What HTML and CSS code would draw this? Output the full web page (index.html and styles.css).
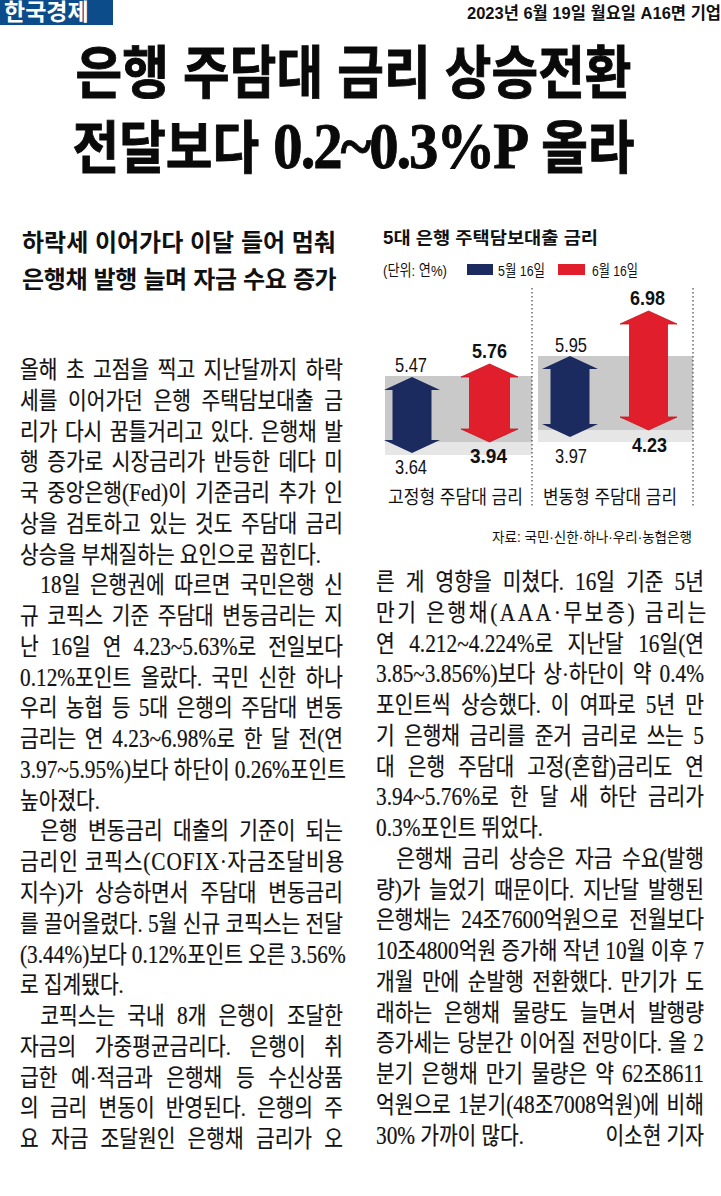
FILE: index.html
```html
<!DOCTYPE html>
<html lang="ko">
<head>
<meta charset="utf-8">
<title>은행 주담대 금리 상승전환</title>
<link rel="stylesheet" href="styles.css">
</head>
<body>
<header class="masthead">
  <div class="logo">한국경제</div>
  <div class="date">2023년 6월 19일 월요일 A16면 기업</div>
</header>

<h1 class="headline">
  <span class="hl-line">은행 주담대 금리 상승전환</span>
  <span class="hl-line">전달보다 <span class="hl-num">0.2~0.3%P</span> 올라</span>
</h1>

<main class="cols">
  <section class="col">
    <h2 class="sub">
      <span class="sub-line">하락세 이어가다 이달 들어 멈춰</span>
      <span class="sub-line">은행채 발행 늘며 자금 수요 증가</span>
    </h2>
    <div class="body body-left">
      <div class="body-inner">
        <span class="ln">올해 초 고점을 찍고 지난달까지 하락</span>
        <span class="ln">세를 이어가던 은행 주택담보대출 금</span>
        <span class="ln">리가 다시 꿈틀거리고 있다. 은행채 발</span>
        <span class="ln">행 증가로 시장금리가 반등한 데다 미</span>
        <span class="ln">국 중앙은행<span class="n">(Fed)</span>이 기준금리 추가 인</span>
        <span class="ln">상을 검토하고 있는 것도 주담대 금리</span>
        <span class="ln end">상승을 부채질하는 요인으로 꼽힌다.</span>
        <span class="ln ind"><span class="n">18</span>일 은행권에 따르면 국민은행 신</span>
        <span class="ln">규 코픽스 기준 주담대 변동금리는 지</span>
        <span class="ln">난 <span class="n">16</span>일 연 <span class="n">4.23~5.63%</span>로 전일보다</span>
        <span class="ln"><span class="n">0.12%</span>포인트 올랐다. 국민 신한 하나</span>
        <span class="ln">우리 농협 등 <span class="n">5</span>대 은행의 주담대 변동</span>
        <span class="ln">금리는 연 <span class="n">4.23~6.98%</span>로 한 달 전<span class="n">(</span>연</span>
        <span class="ln"><span class="n">3.97~5.95%)</span>보다 하단이 <span class="n">0.26%</span>포인트</span>
        <span class="ln end">높아졌다.</span>
        <span class="ln ind">은행 변동금리 대출의 기준이 되는</span>
        <span class="ln loose">금리인 코픽스<span class="n">(COFIX·</span>자금조달비용</span>
        <span class="ln">지수<span class="n">)</span>가 상승하면서 주담대 변동금리</span>
        <span class="ln">를 끌어올렸다. <span class="n">5</span>월 신규 코픽스는 전달</span>
        <span class="ln"><span class="n">(3.44%)</span>보다 <span class="n">0.12%</span>포인트 오른 <span class="n">3.56%</span></span>
        <span class="ln end">로 집계됐다.</span>
        <span class="ln ind">코픽스는 국내 <span class="n">8</span>개 은행이 조달한</span>
        <span class="ln">자금의 가중평균금리다. 은행이 취</span>
        <span class="ln">급한 예·적금과 은행채 등 수신상품</span>
        <span class="ln">의 금리 변동이 반영된다. 은행의 주</span>
        <span class="ln">요 자금 조달원인 은행채 금리가 오</span>
      </div>
    </div>
  </section>

  <section class="col">
    <svg class="chart" width="345" height="347" viewBox="0 0 345 347" aria-label="5대 은행 주택담보대출 금리">
      <text class="c-title" x="7" y="17.5" textLength="215" lengthAdjust="spacingAndGlyphs">5대 은행 주택담보대출 금리</text>

      <text class="c-legend" x="7" y="50" textLength="64" lengthAdjust="spacingAndGlyphs">(단위: 연%)</text>
      <rect x="91" y="44" width="26" height="11" class="f-blue"/>
      <text class="c-legend" x="122" y="50" textLength="47" lengthAdjust="spacingAndGlyphs">5월 16일</text>
      <rect x="182" y="44" width="27" height="11" class="f-red"/>
      <text class="c-legend" x="216" y="50" textLength="46" lengthAdjust="spacingAndGlyphs">6월 16일</text>

      <rect x="9" y="156" width="147" height="66" class="band-dark"/>
      <rect x="9" y="222" width="147" height="13" class="band-light"/>
      <rect x="162" y="136" width="155" height="74" class="band-dark"/>
      <rect x="162" y="210" width="155" height="12" class="band-light"/>

      <line x1="156" y1="68" x2="156" y2="287" class="divider"/>
      <line x1="317" y1="68" x2="317" y2="287" class="divider"/>

      <polygon class="f-blue" points="36,157 64,170 55.5,170 55.5,220 64,220 36,233 8,220 16.5,220 16.5,170 8,170"/>
      <polygon class="f-red arrow-red" points="113.5,144 142,157 133.5,157 133.5,209 142,209 113.5,222 85,209 93.5,209 93.5,157 85,157"/>
      <polygon class="f-blue" points="194,136 222,149 213.5,149 213.5,204 222,204 194,217 166,204 174.5,204 174.5,149 166,149"/>
      <polygon class="f-red arrow-red" points="272.5,91 301,104 291.5,104 291.5,197 301,197 272.5,210 244,197 253.5,197 253.5,104 244,104"/>

      <text class="c-val" x="19" y="144.5" textLength="32" lengthAdjust="spacingAndGlyphs">5.47</text>
      <text class="c-val b" x="96" y="130.5" textLength="35" lengthAdjust="spacingAndGlyphs">5.76</text>
      <text class="c-val" x="19" y="246" textLength="32" lengthAdjust="spacingAndGlyphs">3.64</text>
      <text class="c-val b" x="94" y="235" textLength="37" lengthAdjust="spacingAndGlyphs">3.94</text>
      <text class="c-val" x="179" y="124" textLength="32" lengthAdjust="spacingAndGlyphs">5.95</text>
      <text class="c-val b" x="254" y="77" textLength="35" lengthAdjust="spacingAndGlyphs">6.98</text>
      <text class="c-val" x="179" y="235" textLength="32" lengthAdjust="spacingAndGlyphs">3.97</text>
      <text class="c-val b" x="256" y="224" textLength="35" lengthAdjust="spacingAndGlyphs">4.23</text>

      <text class="c-cat" x="12" y="277" textLength="135" lengthAdjust="spacingAndGlyphs">고정형 주담대 금리</text>
      <text class="c-cat" x="167" y="277" textLength="134" lengthAdjust="spacingAndGlyphs">변동형 주담대 금리</text>

      <text class="c-src" x="116" y="317" textLength="200" lengthAdjust="spacingAndGlyphs">자료: 국민·신한·하나·우리·농협은행</text>
    </svg>

    <div class="body body-right">
      <div class="body-inner">
        <span class="ln">른 게 영향을 미쳤다. <span class="n">16</span>일 기준 <span class="n">5</span>년</span>
        <span class="ln loose-x">만기 은행채<span class="n">(AAA·</span>무보증<span class="n">)</span> 금리는</span>
        <span class="ln">연 <span class="n">4.212~4.224%</span>로 지난달 <span class="n">16</span>일<span class="n">(</span>연</span>
        <span class="ln"><span class="n">3.85~3.856%)</span>보다 상·하단이 약 <span class="n">0.4%</span></span>
        <span class="ln">포인트씩 상승했다. 이 여파로 <span class="n">5</span>년 만</span>
        <span class="ln">기 은행채 금리를 준거 금리로 쓰는 <span class="n">5</span></span>
        <span class="ln">대 은행 주담대 고정<span class="n">(</span>혼합<span class="n">)</span>금리도 연</span>
        <span class="ln"><span class="n">3.94~5.76%</span>로 한 달 새 하단 금리가</span>
        <span class="ln end"><span class="n">0.3%</span>포인트 뛰었다.</span>
        <span class="ln ind">은행채 금리 상승은 자금 수요<span class="n">(</span>발행</span>
        <span class="ln">량<span class="n">)</span>가 늘었기 때문이다. 지난달 발행된</span>
        <span class="ln">은행채는 <span class="n">24</span>조<span class="n">7600</span>억원으로 전월보다</span>
        <span class="ln"><span class="n">10</span>조<span class="n">4800</span>억원 증가해 작년 <span class="n">10</span>월 이후 <span class="n">7</span></span>
        <span class="ln">개월 만에 순발행 전환했다. 만기가 도</span>
        <span class="ln">래하는 은행채 물량도 늘면서 발행량</span>
        <span class="ln">증가세는 당분간 이어질 전망이다. 올 <span class="n">2</span></span>
        <span class="ln">분기 은행채 만기 물량은 약 <span class="n">62</span>조<span class="n">8611</span></span>
        <span class="ln">억원으로 <span class="n">1</span>분기<span class="n">(48</span>조<span class="n">7008</span>억원<span class="n">)</span>에 비해</span>
        <span class="ln byline"><span><span class="n">30%</span> 가까이 많다.</span><span>이소현 기자</span></span>
      </div>
    </div>
  </section>
</main>
</body>
</html>
```

FILE: styles.css
```css
html {
  overflow: hidden;
}

body {
  margin: 0;
  width: 721px;
  background: #ffffff;
  color: #121212;
  font-family: "Liberation Serif", "Noto Sans CJK KR", serif;
}

/* ---------- masthead ---------- */
.masthead {
  display: flex;
  justify-content: space-between;
  align-items: flex-start;
  height: 25px;
}

.logo {
  box-sizing: border-box;
  width: 113px;
  height: 25px;
  padding-left: 4px;
  background: #0d4c8b;
  color: #ffffff;
  font: 700 23px/25px "Liberation Sans", "Noto Sans CJK KR", sans-serif;
}

.date {
  font: 700 16.5px/27px "Liberation Sans", "Noto Sans CJK KR", sans-serif;
  color: #111;
  white-space: nowrap;
}

/* ---------- headline ---------- */
.headline {
  margin: 6px 0 0;
  padding-right: 14px;
  font: 700 57px/75px "Noto Sans CJK KR", sans-serif;
  text-align: center;
  color: #0a0a0a;
  -webkit-text-stroke: 0.9px #0a0a0a;
}

.hl-line {
  display: block;
  white-space: nowrap;
  transform: scaleX(0.89);
}

.hl-num {
  font-family: "Liberation Serif", serif;
  font-size: 66px;
  line-height: 1;
  letter-spacing: -2.3px;
}

/* ---------- columns ---------- */
.cols {
  display: grid;
  grid-template-columns: 323px 328px;
  column-gap: 33px;
  padding-left: 20px;
  margin-top: 39px;
}

.col {
  min-width: 0;
}

.sub {
  margin: 2px 0 0 2px;
  font: 700 24px/37px "Noto Sans CJK KR", sans-serif;
  color: #111;
}

.sub-line {
  display: block;
  white-space: nowrap;
}

.sub-line + .sub-line {
  letter-spacing: -0.35px;
}

.body-left {
  margin-top: 59px;
}

.body-inner {
  width: calc(100% / 0.865);
  transform: scaleX(0.865);
  transform-origin: 0 0;
  font-size: 23.5px;
  line-height: 30.76px;
  -webkit-text-stroke: 0.2px #121212;
}

.ln {
  display: block;
  white-space: nowrap;
  text-align: justify;
  text-align-last: justify;
}

.ln.end {
  text-align-last: left;
}

.ln.ind {
  text-indent: 1em;
}

.ln.loose {
  letter-spacing: 1px;
}

.ln.loose-x {
  letter-spacing: 3px;
}

.ln.byline {
  display: flex;
  justify-content: space-between;
}

.n {
  font-size: 1.05em;
  line-height: 1;
}

/* ---------- chart ---------- */
.chart {
  display: block;
  overflow: visible;
}

.chart text {
  dominant-baseline: central;
  font-family: "Liberation Sans", "Noto Sans CJK KR", sans-serif;
  fill: #111;
}

.c-title {
  font-size: 17.5px;
  font-weight: 700;
}

.c-legend {
  font-size: 15.5px;
  fill: #222;
}

.c-val {
  font-size: 21px;
}

.c-val.b {
  font-weight: 700;
}

.c-cat {
  font-size: 19px;
}

.c-src {
  font-size: 14px;
}

.f-blue {
  fill: #1c2b5f;
}

.f-red {
  fill: #e11e2c;
}

.arrow-red {
  stroke: #c8141f;
  stroke-width: 0.8;
}

.band-dark {
  fill: #c9c9c9;
}

.band-light {
  fill: #e6e6e6;
}

.divider {
  stroke: #333;
  stroke-width: 1.1;
  stroke-dasharray: 1.5 2.5;
}
```
